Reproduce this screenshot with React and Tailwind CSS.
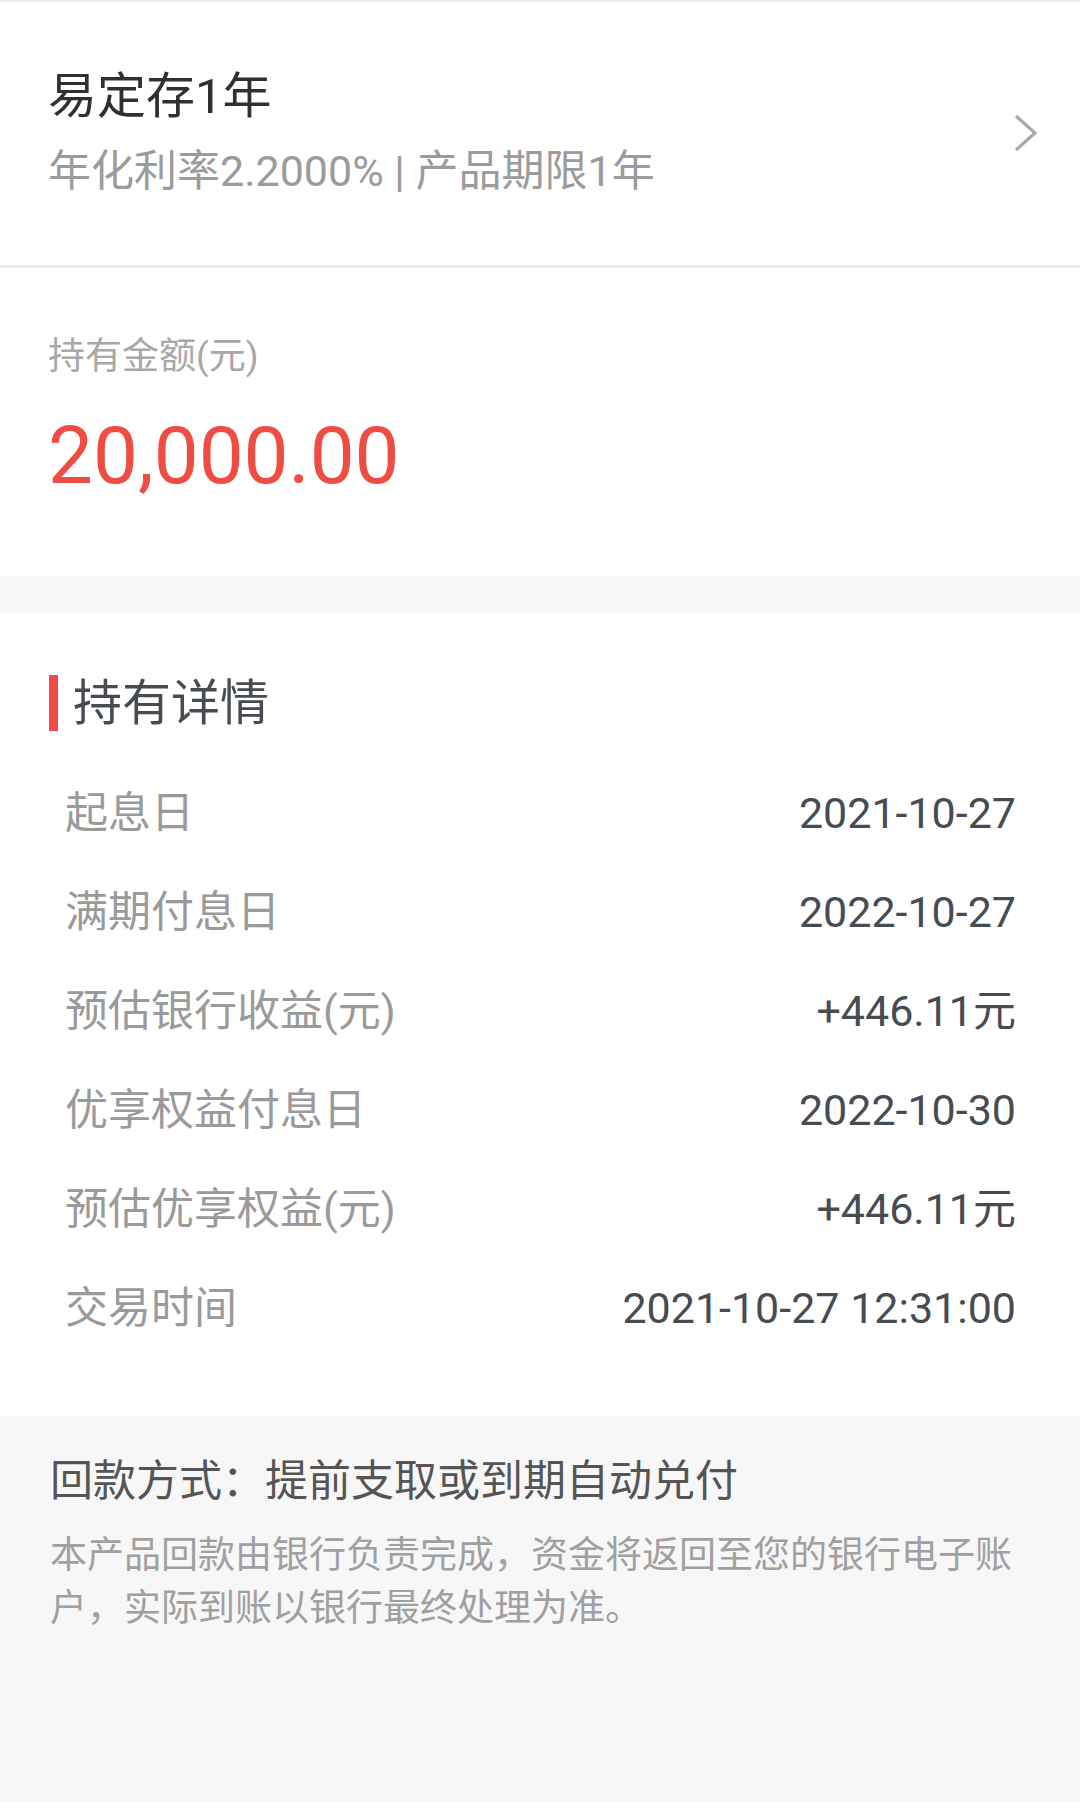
import React from 'react';

const rows = [
  { label: '起息日', value: '2021-10-27' },
  { label: '满期付息日', value: '2022-10-27' },
  { label: '预估银行收益(元)', value: '+446.11元' },
  { label: '优享权益付息日', value: '2022-10-30' },
  { label: '预估优享权益(元)', value: '+446.11元' },
  { label: '交易时间', value: '2021-10-27 12:31:00' },
];

function Chevron() {
  return (
    <svg width="26" height="38" viewBox="0 0 26 38" fill="none">
      <path d="M3 2 L22 19 L3 36" stroke="#aaaaaa" strokeWidth="3.2" strokeLinecap="butt" strokeLinejoin="miter" />
    </svg>
  );
}

export default function App() {
  return (
    <div
      className="w-[1080px] h-[1809px] bg-white overflow-hidden"
      style={{ fontFamily: 'Roboto, "Noto Sans CJK SC", sans-serif' }}
    >
      {/* Product header */}
      <div className="border-t-2 border-[#ececec] flex items-center justify-between pl-[48px] pr-[41px] pt-[70px] pb-[72px]">
        <div className="flex flex-col">
          <div className="text-[49px] leading-[49px] text-[#303030]">易定存1年</div>
          <div className="mt-[29px] text-[43px] leading-[43px] text-[#9b9b9b]">年化利率2.2000% | 产品期限1年</div>
        </div>
        <Chevron />
      </div>
      <div className="h-[3px] bg-[#ececec]" />

      {/* Holding amount */}
      <div className="pl-[48px] pt-[70px] pb-[80px]">
        <div className="text-[37px] leading-[37px] text-[#a8a8a8]">持有金额(元)</div>
        <div className="mt-[41px] text-[80px] leading-[80px] text-[#ef4c43]">20,000.00</div>
      </div>
      <div className="h-[37px] bg-[#f7f7f7]" />

      {/* Holding details */}
      <div className="pt-[62px] pb-[58px]">
        <div className="flex items-center pl-[49px] gap-[15px]">
          <div className="w-[9px] h-[56px] bg-[#ef4a44]" />
          <div className="text-[49px] leading-[49px] text-[#474c52]">持有详情</div>
        </div>
        <div className="mt-[33px] flex flex-col">
          {rows.map((r) => (
            <div key={r.label} className="h-[99px] flex items-center justify-between pl-[65px] pr-[64px]">
              <span className="text-[43px] leading-[43px] text-[#9a9a9a]">{r.label}</span>
              <span className="text-[43px] leading-[43px] text-[#474c52]">{r.value}</span>
            </div>
          ))}
        </div>
      </div>

      {/* Repayment info */}
      <div className="h-[386px] bg-[#f7f7f7] pl-[50px] pr-[60px] pt-[44px]">
        <div className="text-[43px] leading-[43px] text-[#555555]">回款方式：提前支取或到期自动兑付</div>
        <p className="mt-[26px] text-[37px] leading-[53px] text-[#a0a0a0]">
          本产品回款由银行负责完成，资金将返回至您的银行电子账户，实际到账以银行最终处理为准。
        </p>
      </div>
    </div>
  );
}
